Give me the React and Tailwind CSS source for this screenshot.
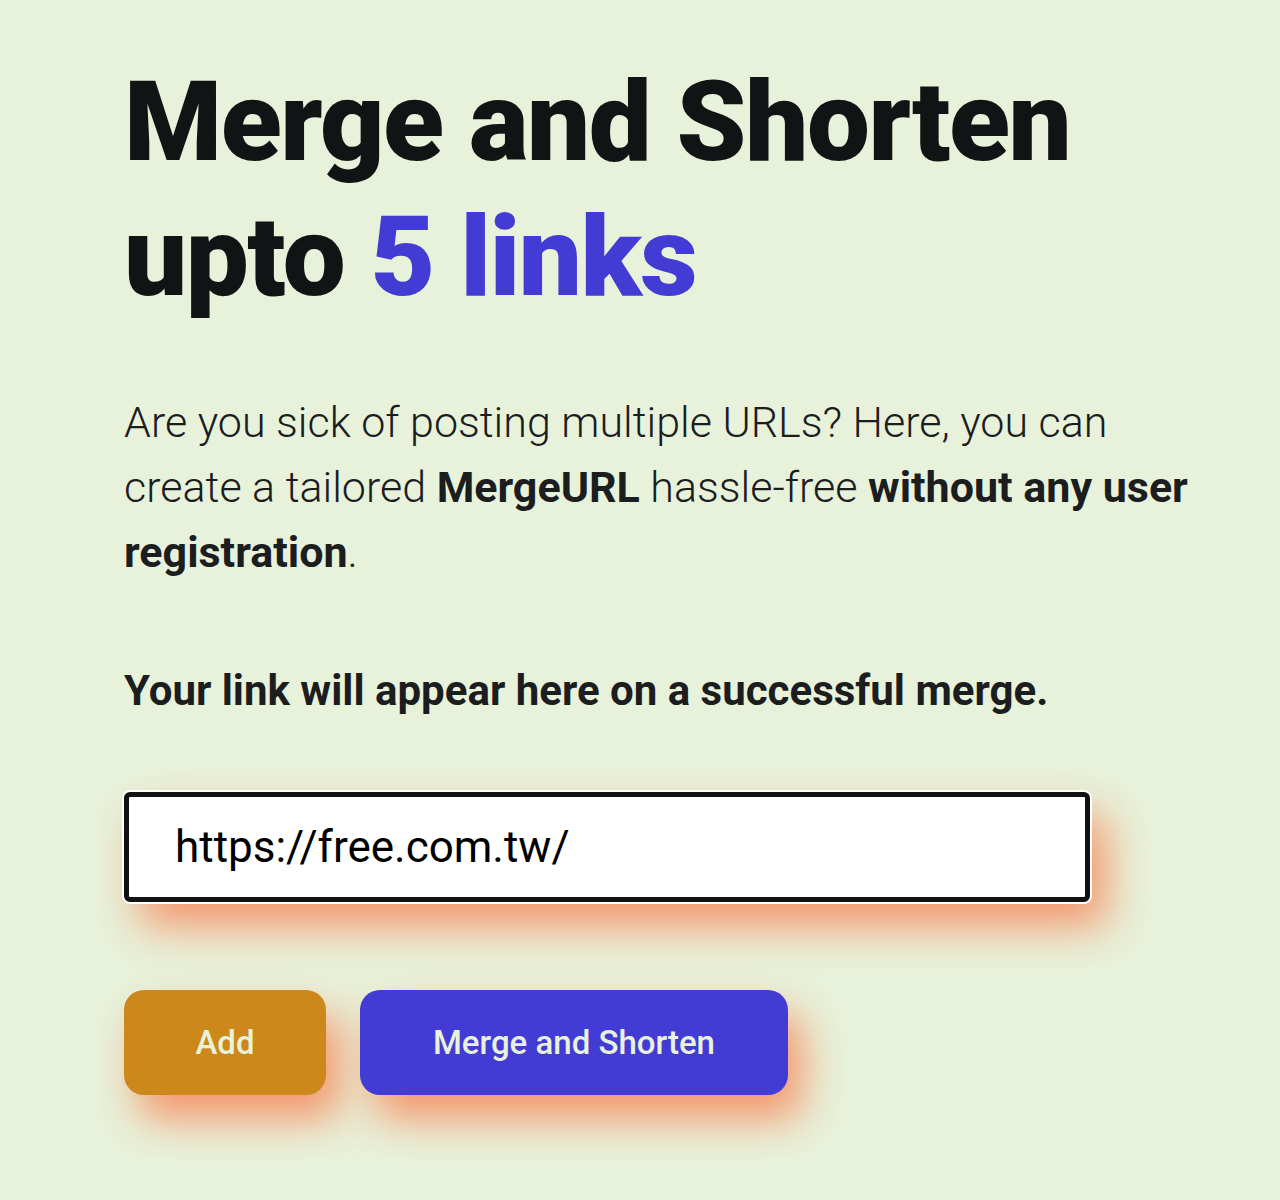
import React from "react";

const App = () => {
  return (
    <div
      className="min-h-[1200px] w-[1280px] bg-[#e8f2da] text-[#111315]"
      style={{ fontFamily: "Roboto, 'Noto Sans', sans-serif" }}
    >
      <div className="pl-[124px] pt-[54px] w-[1240px]">
        <h1 className="text-[112px] leading-[135px] font-black tracking-[-1.5px]">
          Merge and Shorten
          <br />
          upto <span className="text-[#433cd4]">5 links</span>
        </h1>

        <p className="mt-[66px] text-[43px] leading-[65px] font-light text-[#1b1d1f] w-[1110px]">
          Are you sick of posting multiple URLs? Here, you can
          <br />
          create a tailored <strong className="font-bold">MergeURL</strong> hassle-free{" "}
          <strong className="font-bold">without any user registration</strong>.
        </p>

        <h2 className="mt-[82px] text-[42px] leading-[48px] font-bold text-[#1b1d1f]">
          Your link will appear here on a successful merge.
        </h2>

        <div className="mt-[77px] w-[966px] h-[110px] rounded-[6px] border-[5px] border-[#111] bg-white ring-2 ring-white shadow-[16px_24px_44px_rgba(245,140,95,0.9)] flex items-center pl-[46px]">
          <span className="text-[44px] font-normal text-black">https://free.com.tw/</span>
        </div>

        <div className="mt-[88px] flex gap-[34px]">
          <button className="w-[202px] h-[105px] rounded-[20px] bg-[#cc881b] text-[#e8f2da] text-[33px] font-medium shadow-[14px_24px_42px_rgba(245,140,95,0.9)]">
            Add
          </button>
          <button className="w-[428px] h-[105px] rounded-[20px] bg-[#433cd4] text-[#e8f2da] text-[33px] font-medium shadow-[14px_24px_42px_rgba(245,140,95,0.9)]">
            Merge and Shorten
          </button>
        </div>
      </div>
    </div>
  );
};

export default App;
